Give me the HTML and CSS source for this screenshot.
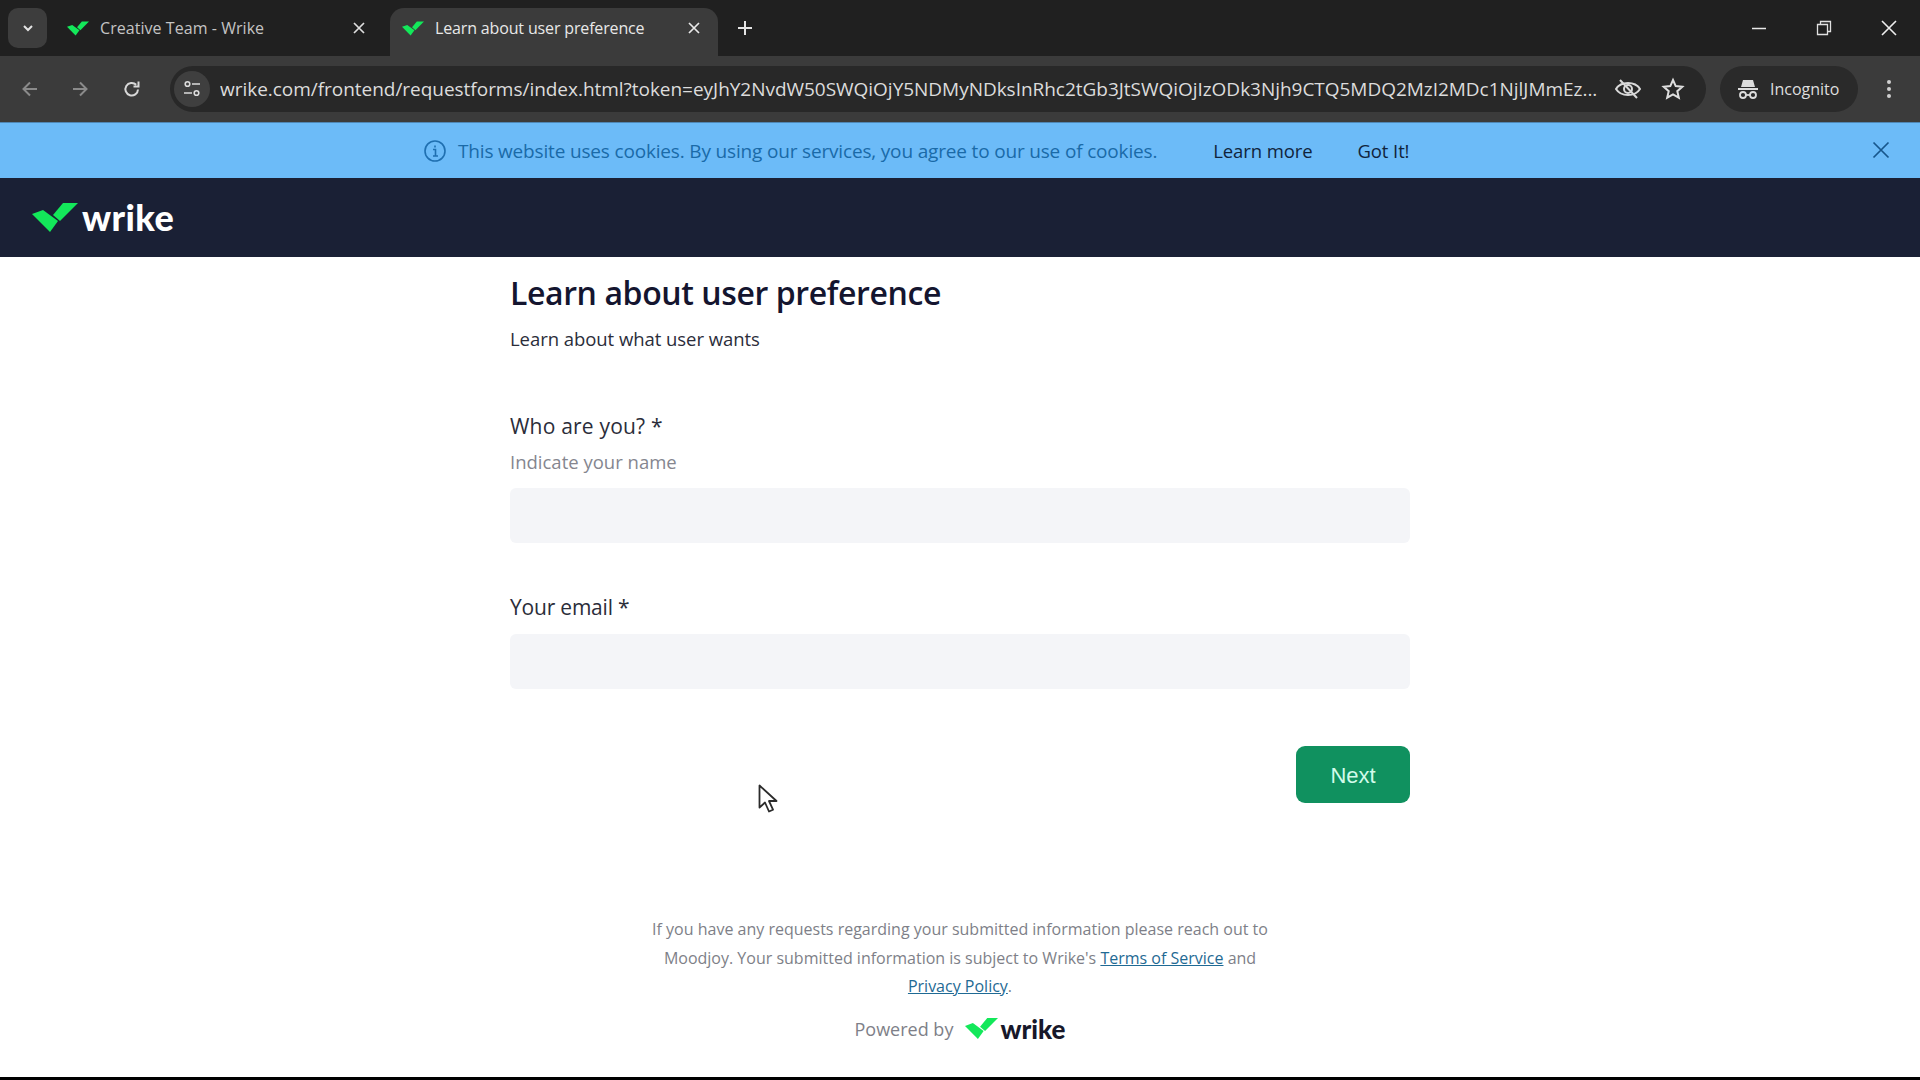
FILE: index.html
```html
<!DOCTYPE html>
<html lang="en">
<head>
<meta charset="utf-8">
<title>Learn about user preference</title>
<link rel="stylesheet" href="styles.css">
</head>
<body>
<svg class="defs" width="0" height="0"><defs>
<symbol id="check" viewBox="0 0 46 29"><path d="M0 11 11 7 26 18 18 29Z" fill="#13e85a"/><path d="M21 12 31 0 46 0 28 18Z" fill="#13e85a"/></symbol>
</defs></svg>
<div class="tabstrip">
  <button class="tabsearch"><svg width="14" height="14" viewBox="0 0 14 14"><path d="M3 5l4 4 4-4" fill="none" stroke="#e4e4e4" stroke-width="2"/></svg></button>
  <div class="tab">
    <svg class="favicon" width="22" height="15"><use href="#check"/></svg>
    <span class="tabtitle">Creative Team - Wrike</span>
    <svg class="tabclose" width="14" height="14" viewBox="0 0 14 14"><path d="M2 2l10 10M12 2L2 12" stroke="#dedede" stroke-width="1.7"/></svg>
  </div>
  <div class="tab tab-active">
    <svg class="favicon" width="22" height="15"><use href="#check"/></svg>
    <span class="tabtitle">Learn about user preference</span>
    <svg class="tabclose" width="14" height="14" viewBox="0 0 14 14"><path d="M2 2l10 10M12 2L2 12" stroke="#e8e8e8" stroke-width="1.7"/></svg>
  </div>
  <svg class="newtab" width="16" height="16" viewBox="0 0 16 16"><path d="M8 1v14M1 8h14" stroke="#e4e4e4" stroke-width="2"/></svg>
  <div class="winctl">
    <svg width="16" height="16" viewBox="0 0 16 16"><path d="M1 8.500h14" stroke="#e8e8e8" stroke-width="1.500"/></svg>
    <svg width="16" height="16" viewBox="0 0 16 16"><path d="M1.500 4.500h10v10h-10z M4.500 4V1.500h10v10H12" fill="none" stroke="#e0e0e0" stroke-width="1.300"/></svg>
    <svg width="16" height="16" viewBox="0 0 16 16"><path d="M1 1l14 14M15 1L1 15" stroke="#eeeeee" stroke-width="1.600"/></svg>
  </div>
</div>
<div class="toolbar">
  <svg class="navicon" width="20" height="20" viewBox="0 0 20 20"><path d="M17 10H4M10 3.500 3.500 10l6.500 6.500" fill="none" stroke="#8a8a8a" stroke-width="2"/></svg>
  <svg class="navicon" width="20" height="20" viewBox="0 0 20 20"><path d="M3 10h13M10 3.500l6.500 6.500-6.500 6.500" fill="none" stroke="#8a8a8a" stroke-width="2"/></svg>
  <svg class="navicon" width="20" height="20" viewBox="0 0 20 20"><path d="M16 10.500a6.300 6.300 0 1 1-1.800-4.700M16.500 2.500v5h-5" fill="none" stroke="#d8d8d8" stroke-width="2"/></svg>
  <div class="omnibox">
    <span class="tune"><svg width="20" height="20" viewBox="0 0 20 20"><g fill="none" stroke="#dcdcdc" stroke-width="1.600"><circle cx="5.500" cy="5" r="2.300"/><path d="M10 5h8M2 14h8"/><circle cx="14.500" cy="14" r="2.300"/></g></svg></span>
    <span class="url">wrike.com/frontend/requestforms/index.html?token=eyJhY2NvdW50SWQiOjY5NDMyNDksInRhc2tGb3JtSWQiOjIzODk3Njh9CTQ5MDQ2MzI2MDc1NjlJMmEz...</span>
    <svg class="omni-eye" width="28" height="24" viewBox="0 0 28 24"><g fill="none" stroke="#d8d8d8" stroke-width="2"><path d="M2 12c5-8 19-8 24 0-5 8-19 8-24 0z"/><circle cx="14" cy="12" r="4"/><path d="M6 3l17 18"/></g></svg>
    <svg class="omni-star" width="24" height="24" viewBox="0 0 24 24"><path d="M12 3l2.700 6.100 6.600.7-5 4.400 1.500 6.500-5.800-3.400-5.800 3.400 1.500-6.500-5-4.400 6.600-.7z" fill="none" stroke="#dedede" stroke-width="2"/></svg>
  </div>
  <div class="incognito">
    <svg width="22" height="22" viewBox="0 0 22 22"><g fill="#dcdcdc"><path d="M6 2h10l2 7H4z"/><rect x="1" y="10" width="20" height="2"/></g><g fill="none" stroke="#dcdcdc" stroke-width="1.800"><circle cx="6" cy="17" r="3"/><circle cx="16" cy="17" r="3"/><path d="M9 17h4"/></g></svg>
    <span>Incognito</span>
  </div>
  <svg class="kebab" width="6" height="22" viewBox="0 0 6 22"><g fill="#d0d0d0"><circle cx="3" cy="4" r="2"/><circle cx="3" cy="11" r="2"/><circle cx="3" cy="18" r="2"/></g></svg>
</div>
<div class="banner">
  <svg class="info" width="24" height="24" viewBox="0 0 24 24"><circle cx="12" cy="12" r="10" fill="none" stroke="#1f6fb0" stroke-width="1.600"/><path d="M10 10.500h2.500v6M10 17h5M12 6.500v2" fill="none" stroke="#1f6fb0" stroke-width="1.600"/></svg>
  <span class="cookie-text">This website uses cookies. By using our services, you agree to our use of cookies.</span>
  <span class="banner-link learn">Learn more</span>
  <span class="banner-link">Got It!</span>
  <svg class="banner-close" width="18" height="18" viewBox="0 0 18 18"><path d="M1.500 1.500l15 15M16.500 1.500l-15 15" stroke="#17568c" stroke-width="1.700"/></svg>
</div>
<header class="brandbar">
  <svg width="46" height="29"><use href="#check"/></svg>
  <span class="wordmark">wrike</span>
</header>
<main class="form">
  <h1>Learn about user preference</h1>
  <p class="subtitle">Learn about what user wants</p>
  <label class="label label-first">Who are you? *</label>
  <p class="hint">Indicate your name</p>
  <div class="input"></div>
  <label class="label label-second">Your email *</label>
  <div class="input input-email"></div>
  <div class="actions"><button class="next">Next</button></div>
  <footer class="legal">
    <p>If you have any requests regarding your submitted information please reach out to<br>Moodjoy. Your submitted information is subject to Wrike's <a href="#">Terms of Service</a> and<br><a href="#">Privacy Policy</a>.</p>
    <div class="powered"><span>Powered by</span><svg width="33" height="21"><use href="#check"/></svg><span class="wordmark-dark">wrike</span></div>
  </footer>
</main>
<div class="bottombar"></div>
<svg class="cursor" width="20" height="30" viewBox="0 0 20 30"><path d="M1.500 1.500v22l5.500-5 4 9 4-1.800-4-8.700h7.500z" fill="#fff" stroke="#2b2b2b" stroke-width="1.800" stroke-linejoin="round"/></svg>
</body>
</html>
```
FILE: styles.css
```css
* { box-sizing: border-box; }
html, body { margin: 0; padding: 0; }
body {
  width: 1920px;
  height: 1080px;
  overflow: hidden;
  position: relative;
  background: #fff;
  display: flex;
  flex-direction: column;
  font-family: "Open Sans", "Noto Sans", sans-serif;
}
.defs { position: absolute; }
.tabstrip {
  height: 56px;
  flex: none;
  background: #202020;
  display: flex;
  align-items: flex-end;
  padding-left: 8px;
}
.tabsearch {
  width: 39px;
  height: 40px;
  margin-bottom: 8px;
  border: 0;
  border-radius: 10px;
  background: #3d3d3d;
  padding: 0;
  display: flex;
  align-items: center;
  justify-content: center;
}
.tab {
  width: 343px;
  height: 48px;
  display: flex;
  align-items: center;
  padding: 0 0 8px 20px;
  color: #c4c4c4;
  font-size: 16px;
  flex: none;
}
.tab-active {
  width: 328px;
  background: #3b3b3b;
  border-radius: 14px 14px 0 0;
  color: #e8e8e8;
  padding-left: 12px;
}
.favicon { flex: none; margin-right: 11px; }
.tabtitle { flex: 1; white-space: nowrap; letter-spacing: 0.05px; }
.tab-active .tabtitle { letter-spacing: -0.15px; }
.tabclose { flex: none; margin-right: 24px; }
.tab-active .tabclose { margin-right: 17px; }
.newtab { margin: 0 0 20px 19px; flex: none; }
.winctl {
  margin-left: auto;
  height: 56px;
  display: flex;
  align-items: center;
  gap: 49px;
  padding-right: 23px;
}
.toolbar {
  height: 66px;
  flex: none;
  background: #3b3b3b;
  display: flex;
  align-items: center;
  padding-left: 20px;
}
.navicon { flex: none; margin-right: 30px; }
.navicon:nth-of-type(2) { margin-right: 32px; }
.navicon:nth-of-type(3) { margin-right: 28px; }
.omnibox {
  width: 1536px;
  height: 46px;
  background: #282828;
  border-radius: 23px;
  display: flex;
  align-items: center;
  flex: none;
  overflow: hidden;
}
.tune {
  width: 36px;
  height: 36px;
  margin-left: 4px;
  border-radius: 50%;
  background: #3f3f3f;
  display: flex;
  align-items: center;
  justify-content: center;
  flex: none;
}
.url {
  margin-left: 10px;
  width: 1383px;
  flex: none;
  font-size: 19px;
  letter-spacing: -0.03px;
  color: #dcdcdc;
  white-space: nowrap;
  overflow: hidden;
}
.omni-eye { flex: none; margin-left: 11px; }
.omni-star { flex: none; margin-left: 19px; }
.incognito {
  width: 138px;
  height: 46px;
  margin-left: 14px;
  border-radius: 23px;
  background: #2a2a2a;
  display: flex;
  align-items: center;
  padding-left: 17px;
  gap: 11px;
  color: #dedede;
  font-size: 16px;
  flex: none;
}
.kebab { margin-left: 28px; flex: none; }
.banner {
  height: 56px;
  flex: none;
  background: #6cbbf8;
  border-top: 1px solid #4f87b5;
  display: flex;
  align-items: center;
  padding-left: 423px;
  font-size: 18.5px;
  position: relative;
}
.info { flex: none; }
.cookie-text { margin-left: 11px; color: #1a6aa8; white-space: nowrap; font-size: 19px; letter-spacing: -0.17px; }
.banner-link { color: #10243c; white-space: nowrap; letter-spacing: -0.1px; margin-left: 45px; padding-bottom: 1px; }
.learn { margin-left: 56px; }
.banner-close { position: absolute; left: 1872px; top: 18px; }
.brandbar {
  height: 79px;
  flex: none;
  background: #1a2035;
  display: flex;
  align-items: center;
  padding-left: 32px;
  gap: 4px;
}
.wordmark {
  font-family: "Lato", sans-serif;
  font-weight: 900;
  font-size: 36px;
  line-height: 1;
  letter-spacing: 0.4px;
  color: #fff;
  margin-bottom: 1px;
}
.form {
  width: 900px;
  margin: 0 auto;
  flex: none;
  color: #1f2130;
}
h1 {
  margin: 14px 0 0;
  font-size: 32px;
  line-height: 44px;
  font-weight: 600;
  color: #14152f;
  letter-spacing: -0.4px;
}
.subtitle {
  margin: 11px 0 0;
  font-size: 18.5px;
  line-height: 26px;
  letter-spacing: -0.05px;
  color: #2b2d3a;
}
.label {
  display: block;
  font-size: 21px;
  line-height: 28px;
  color: #2b2d3a;
  letter-spacing: 0.2px;
}
.label-first { margin-top: 60px; }
.hint {
  margin: 9px 0 0;
  font-size: 18.5px;
  line-height: 26px;
  color: #85868f;
}
.input {
  height: 55px;
  margin-top: 13px;
  background: #f4f5f8;
  border-radius: 6px;
}
.label-second { margin-top: 50px; letter-spacing: -0.2px; }
.input-email { margin-top: 13px; }
.actions { display: flex; justify-content: flex-end; margin-top: 57px; }
.next {
  width: 114px;
  height: 57px;
  padding: 2px 0 0;
  border: 0;
  border-radius: 9px;
  background: #10915f;
  color: #d2fbea;
  font-family: "Liberation Sans", sans-serif;
  font-size: 22px;
}
.legal { text-align: center; margin-top: 112px; color: #7e7f88; font-size: 16px; }
.legal p { margin: 0; line-height: 28.500px; }
.legal a { color: #1f6a94; }
.powered {
  margin-top: 14px;
  display: flex;
  justify-content: center;
  align-items: center;
  font-size: 18px;
  gap: 12px;
  height: 28px;
}
.wordmark-dark {
  font-family: "Lato", sans-serif;
  font-weight: 900;
  font-size: 26px;
  color: #17182a;
  margin-left: -10px;
}
.bottombar { position: absolute; left: 0; right: 0; bottom: 0; height: 3px; background: #000; }
.cursor { position: absolute; left: 758px; top: 784px; }
```
